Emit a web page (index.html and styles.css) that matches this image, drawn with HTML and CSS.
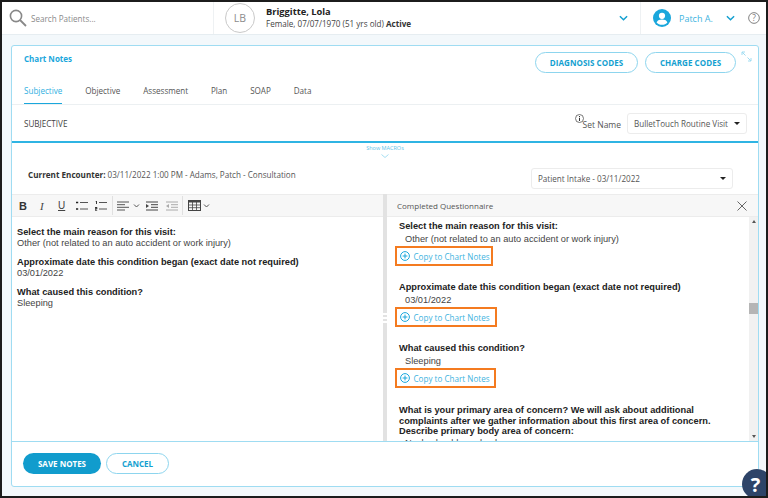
FILE: index.html
```html
<!DOCTYPE html>
<html lang="en">
<head>
<meta charset="utf-8">
<title>Chart Notes</title>
<link rel="stylesheet" href="styles.css">
</head>
<body>
<div class="frame">
  <header class="topbar">
    <div class="search">
      <svg class="search-icon" viewBox="0 0 18 18" width="18" height="18"><circle cx="7" cy="7" r="5.6" fill="none" stroke="#888" stroke-width="1.6"/><path d="M11 11l6 6" stroke="#888" stroke-width="1.8" fill="none"/></svg>
      <span class="search-text">Search Patients...</span>
    </div>
    <div class="patient">
      <div class="avatar">LB</div>
      <div class="patient-info">
        <div class="patient-name">Briggitte, Lola</div>
        <div class="patient-meta">Female, 07/07/1970 (51 yrs old) <b>Active</b></div>
      </div>
      <svg class="chev" viewBox="0 0 10 6" width="9" height="6"><path d="M1 1l4 4 4-4" fill="none" stroke="#129fd0" stroke-width="1.6"/></svg>
    </div>
    <div class="user">
      <svg class="user-icon" viewBox="0 0 18 18" width="18" height="18"><circle cx="9" cy="9" r="9" fill="#1aa7dc"/><circle cx="9" cy="6.8" r="3.1" fill="#fff"/><path d="M3.6 13.4c1-2.2 3-2.9 5.4-2.9s4.4.7 5.4 2.9c-1.3 1.5-3.2 2.3-5.4 2.3s-4.100-.8-5.400-2.300z" fill="#fff"/></svg>
      <span class="user-name">Patch A.</span>
      <svg class="chev" viewBox="0 0 10 6" width="9" height="6"><path d="M1 1l4 4 4-4" fill="none" stroke="#129fd0" stroke-width="1.6"/></svg>
      <svg class="help-small" viewBox="0 0 13 13" width="12" height="12"><circle cx="6.500" cy="6.500" r="5.800" fill="none" stroke="#777" stroke-width="1"/><text x="6.500" y="9.600" text-anchor="middle" class="help-small-q">?</text></svg>
    </div>
  </header>

  <main class="content">
    <section class="card">
      <div class="card-top">
        <div class="card-title">Chart Notes</div>
        <div class="card-actions">
          <button class="pill">DIAGNOSIS CODES</button>
          <button class="pill pill-charge">CHARGE CODES</button>
          <svg class="expand" viewBox="0 0 11 11" width="11" height="11"><path d="M4 1H1v3M1 1l3.500 3.500M7 10h3V7M10 10L6.500 6.500" fill="none" stroke="#9fdcf2" stroke-width="1"/></svg>
        </div>
      </div>
      <nav class="tabs">
        <span class="tab tab-active">Subjective</span>
        <span class="tab">Objective</span>
        <span class="tab">Assessment</span>
        <span class="tab">Plan</span>
        <span class="tab">SOAP</span>
        <span class="tab">Data</span>
      </nav>
      <div class="section-row">
        <span class="section-name">SUBJECTIVE</span>
        <div class="set-name">
          <svg class="info" viewBox="0 0 9 9" width="9" height="9"><circle cx="4.500" cy="4.500" r="4" fill="none" stroke="#555" stroke-width=".8"/><path d="M4.500 2v1M4.500 3.800V7" stroke="#333" stroke-width="1"/></svg>
          <span class="set-label">Set Name</span>
          <div class="select select-set"><span>BulletTouch Routine Visit</span><i class="caret"></i></div>
        </div>
      </div>
      <div class="macros">
        <span class="macros-text">Show MACROs</span>
        <svg viewBox="0 0 8 4" width="8" height="4"><path d="M.5.500L4 3.500 7.500.500" fill="none" stroke="#8fd6ef" stroke-width=".8"/></svg>
      </div>
      <div class="encounter-row">
        <div class="encounter"><b>Current Encounter:</b> 03/11/2022 1:00 PM - Adams, Patch - Consultation</div>
        <div class="select select-intake"><span>Patient Intake - 03/11/2022</span><i class="caret"></i></div>
      </div>
      <div class="panes">
        <div class="pane-left">
          <div class="toolbar">
            <span class="tb tb-b">B</span>
            <span class="tb tb-i">I</span>
            <span class="tb tb-u">U</span>
            <svg class="tb-ic" viewBox="0 0 12 10" width="12" height="10"><path d="M4 1.500h8M4 8h8" stroke="#555" stroke-width="1"/><path d="M0 1.500h2.200M0 8h2.200" stroke="#222" stroke-width="1.600"/></svg>
            <svg class="tb-ic tb-ordered" viewBox="0 0 12 10" width="12" height="10"><path d="M4 1.500h8M4 8h8" stroke="#555" stroke-width="1"/><path d="M.5 0h1v3M0 6.500h2v1.200H0v1.500h2.200" fill="none" stroke="#222" stroke-width=".9"/></svg>
            <span class="tb-sep"></span>
            <svg class="tb-ic" viewBox="0 0 12 10" width="12" height="10"><path d="M0 1h12M0 3.700h8M0 6.300h12M0 9h8" stroke="#555" stroke-width="1"/></svg>
            <svg class="tb-chev" viewBox="0 0 7 4" width="7" height="4"><path d="M1 .5l2.500 2.500L6 .5" fill="none" stroke="#555" stroke-width="1"/></svg>
            <svg class="tb-ic tb-indent" viewBox="0 0 12 10" width="12" height="10"><path d="M0 1h12M5 3.700h7M5 6.300h7M0 9h12" stroke="#444" stroke-width="1"/><path d="M0 3l3 2-3 2z" fill="#444"/></svg>
            <svg class="tb-ic tb-outdent" viewBox="0 0 12 10" width="12" height="10"><path d="M0 1h12M5 3.700h7M5 6.300h7M0 9h12" stroke="#aaa" stroke-width="1"/><path d="M3 3L0 5l3 2z" fill="#aaa"/></svg>
            <span class="tb-sep tb-sep-2"></span>
            <svg class="tb-ic tb-table" viewBox="0 0 13 11" width="13" height="11"><rect x=".5" y=".5" width="12" height="10" fill="none" stroke="#444"/><path d="M.5 1.500h12" stroke="#444" stroke-width="2"/><path d="M.5 5h12M.5 7.700h12M4.500 2v8M8.500 2v8" stroke="#444" stroke-width=".8"/></svg>
            <svg class="tb-chev" viewBox="0 0 7 4" width="7" height="4"><path d="M1 .5l2.500 2.500L6 .5" fill="none" stroke="#555" stroke-width="1"/></svg>
          </div>
          <div class="editor">
            <p><b>Select the main reason for this visit:</b><br>Other (not related to an auto accident or work injury)</p>
            <p><b>Approximate date this condition began (exact date not required)</b><br>03/01/2022</p>
            <p><b>What caused this condition?</b><br>Sleeping</p>
          </div>
        </div>
        <div class="divider">
          <span class="grip"></span><span class="grip"></span><span class="grip"></span>
        </div>
        <div class="pane-right">
          <div class="q-head">
            <span>Completed Questionnaire</span>
            <svg viewBox="0 0 10 10" width="10" height="10"><path d="M.5.500l9 9M9.500.500l-9 9" stroke="#666" stroke-width="1" fill="none"/></svg>
          </div>
          <div class="q-body">
            <div class="q-list">
              <div class="q">
                <div class="q-title">Select the main reason for this visit:</div>
                <div class="q-answer">Other (not related to an auto accident or work injury)</div>
                <a class="copy copy-1"><svg viewBox="0 0 10 10" width="10" height="10"><circle cx="5" cy="5" r="4.400" fill="none" stroke="#1aa7dc" stroke-width="1"/><path d="M5 2.600v4.800M2.600 5h4.800" stroke="#1aa7dc" stroke-width="1"/></svg><span>Copy to Chart Notes</span></a>
              </div>
              <div class="q">
                <div class="q-title">Approximate date this condition began (exact date not required)</div>
                <div class="q-answer">03/01/2022</div>
                <a class="copy copy-2"><svg viewBox="0 0 10 10" width="10" height="10"><circle cx="5" cy="5" r="4.400" fill="none" stroke="#1aa7dc" stroke-width="1"/><path d="M5 2.600v4.800M2.600 5h4.800" stroke="#1aa7dc" stroke-width="1"/></svg><span>Copy to Chart Notes</span></a>
              </div>
              <div class="q">
                <div class="q-title">What caused this condition?</div>
                <div class="q-answer">Sleeping</div>
                <a class="copy copy-3"><svg viewBox="0 0 10 10" width="10" height="10"><circle cx="5" cy="5" r="4.400" fill="none" stroke="#1aa7dc" stroke-width="1"/><path d="M5 2.600v4.800M2.600 5h4.800" stroke="#1aa7dc" stroke-width="1"/></svg><span>Copy to Chart Notes</span></a>
              </div>
              <div class="q">
                <div class="q-title q-title-long">What is your primary area of concern? We will ask about additional complaints after we gather information about this first area of concern. Describe primary body area of concern:</div>
                <div class="q-answer">Neck, shoulder or back</div>
              </div>
            </div>
            <div class="scrollbar">
              <i class="sb-up"></i>
              <span class="sb-track"><span class="sb-thumb"></span></span>
              <i class="sb-down"></i>
            </div>
          </div>
        </div>
      </div>
      <footer class="card-foot">
        <button class="btn-save">SAVE NOTES</button>
        <button class="btn-cancel">CANCEL</button>
      </footer>
    </section>
  </main>
  <div class="help-bubble">?</div>
</div>
</body>
</html>
```

FILE: styles.css
```css
* { box-sizing: border-box; }
html, body { margin: 0; padding: 0; }
body { font-family: "Open Sans", "Liberation Sans", sans-serif; color: #444; }
p { margin: 0; }
button { font-family: inherit; cursor: pointer; }

.frame {
  position: relative;
  width: 768px;
  height: 498px;
  border: 2px solid #1c1c1c;
  background: #f3f8fb;
  display: flex;
  flex-direction: column;
  overflow: hidden;
}

/* top bar */
.topbar {
  height: 33px;
  flex: none;
  display: flex;
  background: #fff;
  border-bottom: 1px solid #e6edf1;
}
.search {
  width: 212px;
  display: flex;
  align-items: center;
  padding-left: 7px;
  border-right: 1px solid #eef1f3;
}
.search-icon { flex: none; }
.search-text { margin-left: 4px; font-size: 8.100px; color: #8a8a8a; }
.patient {
  width: 427px;
  display: flex;
  align-items: center;
  padding-left: 11px;
  border-right: 1px solid #eef1f3;
}
.avatar {
  width: 30px;
  height: 30px;
  flex: none;
  border: 1px solid #c9c9c9;
  border-radius: 50%;
  display: flex;
  align-items: center;
  justify-content: center;
  font-size: 10.500px;
  color: #8b8b8b;
}
.patient-info { margin-left: 11px; flex: 1; margin-top: -1px; }
.patient-name { font-size: 9.300px; font-weight: 700; color: #222; line-height: 12px; }
.patient-meta { font-size: 8.100px; color: #444; line-height: 12px; }
.patient-meta b { color: #333; }
.patient .chev { margin-right: 12px; }
.user { flex: 1; display: flex; align-items: center; padding-left: 12px; }
.user-icon { flex: none; }
.user-name { margin-left: 8px; font-size: 9px; color: #3fb4e0; width: 47px; }
.help-small { margin-left: 13px; }
.help-small-q { font: 9px "Open Sans", sans-serif; fill: #777; }

/* card */
.content { flex: 1; padding: 10px 7px 9px 9px; display: flex; min-height: 0; }
.card {
  flex: 1;
  display: flex;
  flex-direction: column;
  background: #fff;
  border: 1px solid #9fdcf2;
  border-radius: 3px;
  min-width: 0;
}
.card-top {
  height: 32px;
  flex: none;
  display: flex;
  justify-content: space-between;
  padding: 6px 0 0 12px;
}
.card-title { font-size: 8px; font-weight: 700; color: #1aa7dc; line-height: 13px; }
.card-actions { display: flex; align-items: flex-start; }
.pill {
  height: 21px;
  width: 103px;
  padding: 0;
  background: #fff;
  border: 1px solid #8dd5ee;
  border-radius: 11px;
  font-size: 8px;
  font-weight: 700;
  color: #149fd0;
  letter-spacing: .05px;
}
.pill-charge { width: 91px; margin-left: 7px; }
.expand { margin: -1px 6px 0 5px; }

.tabs {
  height: 27px;
  flex: none;
  display: flex;
  gap: 22.800px;
  padding-left: 12px;
  border-bottom: 1px solid #ecf0f2;
  font-size: 8.100px;
}
.tab { color: #555; line-height: 26px; height: 26px; }
.tab-active { color: #2fb0df; border-bottom: 1px solid #1aa7dc; }

.section-row {
  height: 38px;
  flex: none;
  display: flex;
  align-items: center;
  justify-content: space-between;
  padding: 0 11px 0 12px;
  border-bottom: 2px solid #2fb4e3;
}
.section-name { font-size: 8.100px; color: #444; }
.set-name { display: flex; align-items: center; }
.info { align-self: flex-start; margin-top: 1px; margin-right: -1px; }
.set-label { font-size: 8.500px; color: #555; margin-right: 6px; margin-top: 2px; }
.select {
  height: 21px;
  display: flex;
  align-items: center;
  justify-content: space-between;
  background: #fff;
  border: 1px solid #ececec;
  border-radius: 3px;
  font-size: 8.100px;
  color: #555;
  padding: 0 6px;
  white-space: nowrap;
}
.select-set { width: 120px; }
.select-intake { width: 202px; margin-right: 25px; }
.caret {
  width: 0;
  height: 0;
  border-left: 3px solid transparent;
  border-right: 3px solid transparent;
  border-top: 3px solid #222;
}

.macros {
  height: 15px;
  flex: none;
  display: flex;
  flex-direction: column;
  align-items: center;
  margin-top: 1px;
}
.macros-text { font-size: 5.500px; line-height: 8px; color: #62c3e8; }
.macros svg { margin-top: 2px; }

.encounter-row {
  height: 35px;
  flex: none;
  display: flex;
  justify-content: space-between;
  padding: 9px 0 0 16px;
}
.encounter { font-size: 8.100px; line-height: 14px; color: #555; }
.encounter b { color: #333; }

/* panes */
.panes { flex: 1; display: flex; min-height: 0; border-bottom: 1px solid #9fdcf2; }
.pane-left { width: 371px; flex: none; display: flex; flex-direction: column; }
.toolbar {
  height: 23px;
  flex: none;
  display: flex;
  align-items: center;
  background: #f7f7f7;
  border-top: 1px solid #ececec;
  border-bottom: 1px solid #ececec;
  padding-left: 7px;
}
.tb { font-family: "Liberation Sans", sans-serif; text-align: left; color: #444; }
.tb-b { font-size: 11px; font-weight: 700; color: #333; width: 21px; }
.tb-i { font-family: "Liberation Serif", serif; font-size: 11px; font-style: italic; width: 18px; }
.tb-u { font-size: 10px; text-decoration: underline; width: 18px; }
.tb-ic { margin-right: 7px; flex: none; }
.tb-ordered { margin-right: 5px; }
.tb-sep { width: 1px; height: 19px; background: #e0e0e0; margin: 0 4px 0 0; }
.tb-sep-2 { margin: 0 5px 0 1px; }
.tb-chev { margin-left: -3px; margin-right: 6px; flex: none; }
.tb-indent { margin-right: 8px; }
.tb-outdent { margin-right: 3px; }
.tb-table { margin-right: 5px; }

.editor {
  flex: 1;
  padding: 10px 5px 0 5px;
  font-family: "Liberation Sans", Arial, sans-serif;
  font-size: 9.250px;
  line-height: 10.500px;
  color: #444;
}
.editor b { color: #222; }
.editor p { margin-bottom: 9px; }

.divider {
  width: 4px;
  flex: none;
  background: #e2e2e2;
  display: flex;
  flex-direction: column;
  align-items: center;
  justify-content: center;
  gap: 2px;
}
.grip { width: 4px; height: 2px; background: #fff; }

.pane-right { flex: 1; min-width: 0; display: flex; flex-direction: column; }
.q-head {
  height: 23px;
  flex: none;
  display: flex;
  align-items: center;
  justify-content: space-between;
  padding: 0 11px 0 10px;
  background: #f7f7f7;
  border-top: 1px solid #ececec;
  border-bottom: 1px solid #ececec;
  font-size: 8px;
  color: #555;
}
.q-body { flex: 1; display: flex; min-height: 0; overflow: hidden; }
.q-list {
  flex: 1;
  min-width: 0;
  overflow: hidden;
  padding: 3px 4px 0 12px;
  font-family: "Liberation Sans", Arial, sans-serif;
  font-size: 9.250px;
}
.q { margin-bottom: 15px; }
.q-title { font-weight: 700; color: #222; line-height: 13px; }
.q-title-long { line-height: 10.600px; margin-top: 17px; }
.q-answer { color: #444; padding-left: 6px; line-height: 13px; }
.copy {
  display: inline-flex;
  align-items: center;
  height: 20px;
  margin: 0 0 0 -4.500px;
  padding-left: 3px;
  border: 2px solid #f47b20;
  font-family: "Open Sans", sans-serif;
  font-size: 8.100px;
  color: #3fb4e0;
  white-space: nowrap;
}
.copy span { margin-left: 4px; }
.copy-1 { width: 98px; }
.copy-2 { width: 102px; }
.copy-3 { width: 101px; }

.scrollbar {
  width: 9px;
  flex: none;
  background: #f1f1f1;
  display: flex;
  flex-direction: column;
  align-items: center;
  justify-content: space-between;
  padding: 3px 0;
}
.sb-up, .sb-down {
  width: 0;
  height: 0;
  border-left: 2px solid transparent;
  border-right: 2px solid transparent;
}
.sb-up { border-bottom: 3px solid #555; }
.sb-down { border-top: 3px solid #555; }
.sb-track { flex: 1; width: 100%; padding-top: 80px; }
.sb-thumb { display: block; height: 11px; width: 100%; background: #b5b5b5; }

.card-foot {
  height: 44px;
  flex: none;
  display: flex;
  align-items: center;
  gap: 5px;
  padding: 0 0 1px 11px;
}
.btn-save, .btn-cancel {
  height: 21px;
  border-radius: 11px;
  padding: 0;
  font-size: 8px;
  font-weight: 700;
}
.btn-save { width: 78px; background: #119ccd; border: 0; color: #fff; }
.btn-cancel { width: 63px; background: #fff; border: 1px solid #8dd5ee; color: #149fd0; }

.help-bubble {
  position: absolute;
  right: -6px;
  bottom: -3px;
  width: 30px;
  height: 30px;
  border-radius: 50%;
  background: #2e4468;
  color: #fff;
  font-size: 20px;
  font-weight: 700;
  display: flex;
  align-items: center;
  justify-content: center;
  padding-right: 3px;
}
```
